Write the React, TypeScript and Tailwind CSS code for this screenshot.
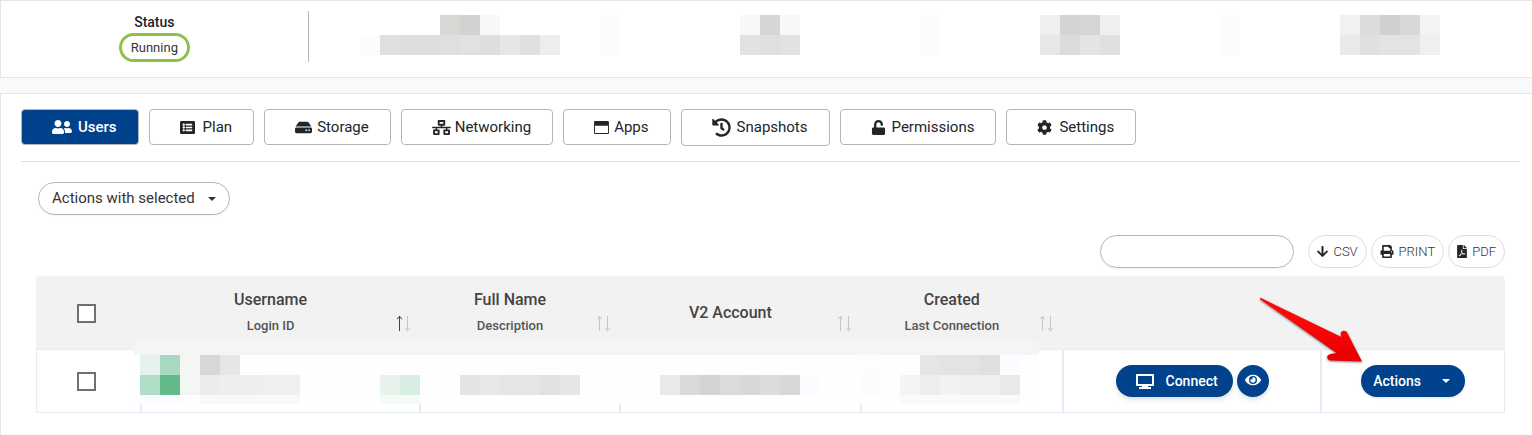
import * as React from "react";
import {
  FaArrowDown,
  FaCog,
  FaEye,
  FaFilePdf,
  FaHdd,
  FaHistory,
  FaListAlt,
  FaNetworkWired,
  FaPrint,
  FaUnlock,
  FaUserFriends,
} from "react-icons/fa";
import clsx from "clsx";

type IconType = React.ComponentType<{ className?: string }>;

function WindowIcon({ className }: { className?: string }) {
  return (
    <svg viewBox="0 0 16 14" className={className} fill="currentColor" aria-hidden="true">
      <path fillRule="evenodd" d="M1 0h14a1 1 0 0 1 1 1v12a1 1 0 0 1-1 1H1a1 1 0 0 1-1-1V1a1 1 0 0 1 1-1Zm0 5v8h14V5H1Z" />
    </svg>
  );
}

function MonitorIcon({ className }: { className?: string }) {
  return (
    <svg viewBox="0 0 18 15" className={className} fill="currentColor" aria-hidden="true">
      <path fillRule="evenodd" d="M1 0h16a1 1 0 0 1 1 1v10a1 1 0 0 1-1 1h-5v1h3v2H3v-2h3v-1H1a1 1 0 0 1-1-1V1a1 1 0 0 1 1-1Zm1 2v8h14V2H2Z" />
    </svg>
  );
}

const tabs: { label: string; icon: IconType; iconClass: string; active?: boolean }[] = [
  { label: "Users", icon: FaUserFriends, iconClass: "h-4 w-5 mr-[6px]", active: true },
  { label: "Plan", icon: FaListAlt, iconClass: "size-[15px] mr-2" },
  { label: "Storage", icon: FaHdd, iconClass: "size-[17px] mr-[5px]" },
  { label: "Networking", icon: FaNetworkWired, iconClass: "h-[15px] w-[19px] mr-1" },
  { label: "Apps", icon: WindowIcon, iconClass: "h-[13px] w-[15px] mr-[5px]" },
  { label: "Snapshots", icon: FaHistory, iconClass: "my-2 size-[19px] mr-[6px]" },
  { label: "Permissions", icon: FaUnlock, iconClass: "size-[15px] mr-[6px]" },
  { label: "Settings", icon: FaCog, iconClass: "size-[15px] mr-[7px]" },
];

const exports: { label: string; icon: IconType; iconClass: string }[] = [
  { label: "CSV", icon: FaArrowDown, iconClass: "w-[11px]" },
  { label: "PRINT", icon: FaPrint, iconClass: "w-[14px]" },
  { label: "PDF", icon: FaFilePdf, iconClass: "w-[10px]" },
];

// Hidden values: each entry is one run of blocks on a 20px raster
const summaryBlocks: string[][] = [
  [
    "w-20",
    "w-5 bg-[#d9d7d4]",
    "w-5 bg-[#d1d2d4]",
    "w-5 bg-[#f8f8f8]",
    "w-25",
    "w-5 bg-[#fbfbfb]",
    "w-30",
    "w-5 bg-[#f9f8f6]",
    "w-5 bg-[#d5d6d8]",
    "w-5 bg-[#f7f9f8]",
    "w-30",
    "w-5 bg-[#fbfbfb]",
    "w-25",
    "w-5 bg-[#f0efed]",
    "w-5 bg-[#d2d4d2]",
    "w-5 bg-[#d4d5d7]",
    "w-5 bg-[#eef0ef]",
    "w-25",
    "w-5 bg-[#fbfbfb]",
    "w-25",
    "w-5 bg-[#f3f1ef]",
    "w-5 bg-[#dadbdd]",
    "w-5 bg-[#cfd1cf]",
    "w-5 bg-[#d7d8da]",
    "w-5 bg-[#f2f4f3]",
  ],
  [
    "w-5 bg-[#fcfcfc]",
    "w-5 bg-[#dfdfdf]",
    "w-10 bg-[#dddddd]",
    "w-5 bg-[#dfdfdf]",
    "w-5 bg-[#e0e2e1]",
    "w-5 bg-[#dedede]",
    "w-5 bg-[#e5e7e6]",
    "w-5 bg-[#dfe1e0]",
    "w-5 bg-[#ecedef]",
    "w-10",
    "w-5 bg-[#fbfbfb]",
    "w-30",
    "w-5 bg-[#e2e2e2]",
    "w-5 bg-[#e1dfdd]",
    "w-5 bg-[#e1e2e4]",
    "w-30",
    "w-5 bg-[#fbfbfb]",
    "w-25",
    "w-5 bg-[#e7e7e7]",
    "w-5 bg-[#dadbdd]",
    "w-5 bg-[#e4e4e4]",
    "w-5 bg-[#dedfe1]",
    "w-25",
    "w-5 bg-[#fbfbfb]",
    "w-25",
    "w-5 bg-[#e9e9e9]",
    "w-5 bg-[#e0e0e0]",
    "w-5 bg-[#e3e3e3]",
    "w-5 bg-[#e2e4e3]",
    "w-5 bg-[#eeeff1]",
  ],
];

const rowBlocks: string[][] = [
  [
    "w-5 bg-[#e5f2eb]",
    "w-5 bg-[#a9dac1]",
    "w-5 bg-[#f7f5f4]",
    "w-5 bg-[#d6d7d9]",
    "w-5 bg-[#e6e6e6]",
    "w-155",
    "w-5 bg-[#fdfdfd]",
    "w-10",
    "w-5 bg-[#e4e6e5]",
    "w-5 bg-[#e4e3e1]",
    "w-5 bg-[#e3e3e3]",
    "w-5 bg-[#dfdfdf]",
    "w-5 bg-[#fbfcff]",
  ],
  [
    "w-5 bg-[#b0dec6]",
    "w-5 bg-[#62ba89]",
    "w-5 bg-[#f3f7f4]",
    "w-5 bg-[#ececec]",
    "w-10 bg-[#eeeeee]",
    "w-10 bg-[#efefef]",
    "w-20",
    "w-5 bg-[#e5f3ea]",
    "w-5 bg-[#d8eee3]",
    "w-10",
    "w-5 bg-[#e4e4e4]",
    "w-5 bg-[#e6e8e7]",
    "w-5 bg-[#e5e5e5]",
    "w-5 bg-[#e5e5e3]",
    "w-5 bg-[#e1e1e1]",
    "w-5 bg-[#e6e6e6]",
    "w-20",
    "w-5 bg-[#ebe9ea]",
    "w-5 bg-[#d9d9d9]",
    "w-5 bg-[#d3d3d3]",
    "w-5 bg-[#dadcdb]",
    "w-5 bg-[#d8d8d8]",
    "w-5 bg-[#dadddb]",
    "w-5 bg-[#dad8d7]",
    "w-5 bg-[#fbfcff]",
    "w-10",
    "w-5 bg-[#fbfcfe]",
    "w-5",
    "w-5 bg-[#f4f4f2]",
    "w-5 bg-[#ededed]",
    "w-5 bg-[#f2f2f2]",
    "w-10 bg-[#eeefef]",
    "w-5 bg-[#e9e9e9]",
  ],
];

const rowFade: string[][] = [
  [
    "w-10 bg-[#f9fdff]",
    "w-5",
    "w-25 bg-[#f9f9f9]",
    "w-20",
    "w-10 bg-[#f3faf7]",
    "w-120",
    "w-30 bg-[#fafafa]",
  ],
];

function Blocks({ rows, height = "h-5" }: { rows: string[][]; height?: string }) {
  return (
    <div aria-hidden="true">
      {rows.map((row, i) => (
        <div key={i} className={clsx("flex", height)}>
          {row.map((block, j) => (
            <span key={j} className={clsx("shrink-0", block)} />
          ))}
        </div>
      ))}
    </div>
  );
}

function SortArrows({ sorted }: { sorted?: boolean }) {
  return (
    <svg
      viewBox="0 0 17 17"
      className="absolute right-2 bottom-[17px] h-[17px] w-[17px]"
      fill="none"
      aria-hidden="true"
    >
      <g className={sorted ? "text-[#444444]" : "text-[#c4c6ca]"} stroke="currentColor">
        <path d="M4.500 1v15M2 4.200 4.500 1.200 7 4.200" />
      </g>
      <g className="text-[#c4c6ca]" stroke="currentColor">
        <path d="M12.500 1v15M10 12.800l2.500 3 2.500-3" />
      </g>
    </svg>
  );
}

interface HeadCellProps {
  title: string;
  sub?: string;
  sorted?: boolean;
  width: string;
}

function HeadCell({ title, sub, sorted, width }: HeadCellProps) {
  return (
    <th scope="col" className={clsx("relative pt-px pr-7 pl-2 font-medium", width)}>
      <div className="text-base leading-[26px] text-[#444444]">{title}</div>
      {sub && <div className="text-[13px] leading-[26px] text-[#555555]">{sub}</div>}
      <SortArrows sorted={sorted} />
    </th>
  );
}

function Checkbox({ label }: { label: string }) {
  return (
    <input
      type="checkbox"
      aria-label={label}
      className="block mx-auto size-[19px] appearance-none border-2 border-[#707070] bg-white checked:bg-[#00438c]"
    />
  );
}

function Caret({ className }: { className?: string }) {
  return (
    <svg viewBox="0 0 8 4" className={clsx("h-1 w-2", className)} fill="currentColor" aria-hidden="true">
      <path d="M0 0h8L4 4Z" />
    </svg>
  );
}

function PointerArrow() {
  return (
    <svg
      viewBox="0 0 106 66"
      className="pointer-events-none absolute top-[21px] right-[141px] h-[66px] w-[106px] drop-shadow-[0_1px_1px_rgba(0,0,0,0.5)]"
      aria-hidden="true"
    >
      <defs>
        <linearGradient id="pointer" x1="0.600" y1="0.400" x2="0.500" y2="0.800">
          <stop offset="0" stopColor="#ff0808" />
          <stop offset="1" stopColor="#e80000" />
        </linearGradient>
      </defs>
      <path
        fill="url(#pointer)"
        d="M3 1 83.500 40 82.800 37.500C82.300 33 88 32.800 89.400 36L104 64.500 72.500 63.500C68 63 68.200 57.500 72.500 57L78.500 56 2.300 2.500C1.500 1.500 2 .6 3 1Z"
      />
    </svg>
  );
}

function StatusBar() {
  return (
    <section className="flex border border-r-0 border-[#e5e5e5] bg-white pt-[10px] pb-[15px]">
      <div className="flex h-[51px] w-[20.100%] shrink-0 flex-col items-center border-r border-[#b5b5b5]">
        <span className="text-sm leading-[22px] font-medium text-[#212529]">Status</span>
        <span className="rounded-full border-3 border-[#8bc34a] px-[9px] text-[13px] leading-[23px] text-[#333333]">
          Running
        </span>
      </div>
      <div className="min-w-0 flex-1 overflow-hidden pt-1 pl-[51px]">
        <Blocks rows={summaryBlocks} />
      </div>
    </section>
  );
}

function UsersTable() {
  return (
    <div className="relative mt-2">
      <table className="w-full table-fixed border-separate border-spacing-0 text-center">
        <thead>
          <tr className="h-[73px] bg-[#f2f2f2]">
            <th scope="col" className="w-[7.150%] rounded-tl-[4px] pt-[2px] pr-1">
              <Checkbox label="Select all users" />
            </th>
            <HeadCell title="Username" sub="Login ID" width="w-[19%]" sorted />
            <HeadCell title="Full Name" sub="Description" width="w-[13.600%]" />
            <HeadCell title="V2 Account" width="w-[16.400%]" />
            <HeadCell title="Created" sub="Last Connection" width="w-[13.750%]" />
            <td className="w-[17.600%]" />
            <td className="w-[12.500%] rounded-tr-[4px]" />
          </tr>
        </thead>
        <tbody>
          <tr className="h-16 [&>td]:border [&>td]:border-[#e6ebf4]">
            <td className="pr-1">
              <Checkbox label="Select user" />
            </td>
            <td />
            <td />
            <td />
            <td />
            <td>
              <div className="flex items-center justify-center gap-1">
                <button
                  type="button"
                  className="flex h-8 items-center rounded-full bg-[#00438c] pr-[15px] pl-5 text-sm font-medium text-white shadow-md"
                >
                  <MonitorIcon className="mr-3 h-[15px] w-[18px]" />
                  Connect
                </button>
                <button
                  type="button"
                  aria-label="View"
                  className="flex size-8 items-center justify-center rounded-full bg-[#00438c] pb-[2px] text-white shadow-md"
                >
                  <FaEye className="size-4" />
                </button>
              </div>
            </td>
            <td>
              <button
                type="button"
                className="mx-auto flex h-8 items-center rounded-full bg-[#00438c] pr-[15px] pl-3 text-sm font-medium text-white shadow-sm"
              >
                Actions
                <Caret className="ml-[21px]" />
              </button>
            </td>
          </tr>
        </tbody>
      </table>
      <div className="pointer-events-none absolute top-[65px] left-[98px] w-[905px] overflow-hidden bg-[#fefefe]">
        <div className="h-[14px] bg-[#f5f5f5]" />
        <div className="pl-[6px]">
          <Blocks rows={rowBlocks} />
          <Blocks rows={rowFade} height="h-[9px]" />
        </div>
      </div>
      <PointerArrow />
    </div>
  );
}

export default function App() {
  return (
    <div className="flex min-h-screen flex-col bg-[#f8f9fb] font-[Roboto,sans-serif] text-[#212529]">
      <StatusBar />

      <main className="mt-[15px] flex-1 border-t border-l border-[#e5e5e5] bg-white pt-[15px] pr-3 pl-5">
        <nav className="flex flex-wrap items-start gap-[10px] border-b border-[#dfdfe9] pb-[15px]">
          {tabs.map(({ label, icon: Icon, iconClass, active }) => (
            <button
              key={label}
              type="button"
              className={clsx(
                "flex min-h-9 items-center rounded-[4px] border border-[#b5b5b5] pr-[21px] pl-[30px] text-[15px]",
                active ? "bg-[#00438c] font-medium text-white" : "bg-white",
              )}
            >
              <Icon className={clsx("shrink-0", iconClass)} />
              {label}
            </button>
          ))}
        </nav>

        <div className="pt-5 pr-[15px] pl-[15px]">
          <button
            type="button"
            className="ml-[2px] flex h-[33px] items-center rounded-full border border-[#b5b5b5] px-[13px] text-[15px] text-[#333333] shadow-xs"
          >
            Actions with selected
            <Caret className="ml-[13px]" />
          </button>

          <div className="mt-5 flex items-center justify-end gap-1">
            <input
              type="search"
              aria-label="Search"
              className="mr-[10px] h-[33px] w-[194px] rounded-full border border-[#b5b5b5] px-3 text-sm shadow-xs outline-none"
            />
            {exports.map(({ label, icon: Icon, iconClass }) => (
              <button
                key={label}
                type="button"
                className="flex h-[33px] items-center gap-[5px] rounded-full border border-[#dddddd] px-2 text-[13px] font-light text-[#333333]"
              >
                <Icon className={clsx("h-[13px] shrink-0 text-[#212529]", iconClass)} />
                {label}
              </button>
            ))}
          </div>

          <UsersTable />
        </div>
      </main>
    </div>
  );
}
